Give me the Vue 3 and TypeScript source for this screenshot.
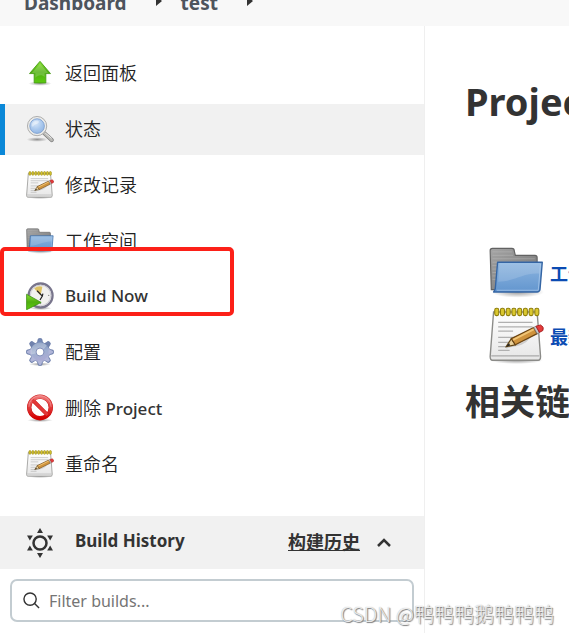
<script setup lang="ts">
import { ref } from 'vue'

interface Part {
  text: string
  han: boolean
}

interface Task {
  label: string
  icon: string
  active?: boolean
}

const tasks: Task[] = [
  { label: '返回面板', icon: 'up' },
  { label: '状态', icon: 'search', active: true },
  { label: '修改记录', icon: 'notepad' },
  { label: '工作空间', icon: 'folder' },
  { label: 'Build Now', icon: 'clock' },
  { label: '配置', icon: 'gear' },
  { label: '删除 Project', icon: 'delete' },
  { label: '重命名', icon: 'notepad' },
]

// Han and Latin runs carry different weights, so a label is split into both.
function parts(label: string): Part[] {
  const runs = label.match(/[\u4e00-\u9fff]+|[^\u4e00-\u9fff]+/g) ?? []
  return runs.map((text) => ({ text, han: /[\u4e00-\u9fff]/.test(text) }))
}

const teeth = [0, 45, 90, 135, 180, 225, 270, 315]
const rays = [0, 60, 120, 180, 240, 300]
const rings = [7, 12, 17, 22, 27, 32, 37, 42]
const filter = ref('')
</script>

<template>
  <div class="page">
    <svg class="sprite" aria-hidden="true">
      <defs>
        <linearGradient id="g-green" x1="0" y1="0" x2="0" y2="1">
          <stop offset="0" stop-color="#8ae234" /><stop offset=".5" stop-color="#4fae10" /><stop offset="1" stop-color="#5ccb10" />
        </linearGradient>
        <linearGradient id="g-blue" x1="0" y1="0" x2="0" y2="1">
          <stop offset="0" stop-color="#8db5df" /><stop offset="1" stop-color="#6396cf" />
        </linearGradient>
        <linearGradient id="g-grey" x1="0" y1="0" x2="1" y2="1">
          <stop offset="0" stop-color="#a5a5a5" /><stop offset="1" stop-color="#707070" />
        </linearGradient>
        <linearGradient id="g-paper" x1="0" y1="0" x2="0" y2="1">
          <stop offset="0" stop-color="#ffffff" /><stop offset="1" stop-color="#e6e6e6" />
        </linearGradient>
        <linearGradient id="g-gear" gradientUnits="userSpaceOnUse" x1="18" y1="2" x2="28" y2="46">
          <stop offset="0" stop-color="#5f7bab" /><stop offset=".5" stop-color="#9eaed0" /><stop offset="1" stop-color="#b3a8d6" />
        </linearGradient>
        <linearGradient id="g-red" x1="0" y1="0" x2="0" y2="1">
          <stop offset="0" stop-color="#ee7777" /><stop offset="1" stop-color="#d40000" />
        </linearGradient>
        <radialGradient id="g-lens" cx=".4" cy=".3" r=".8">
          <stop offset="0" stop-color="#d6e6f8" /><stop offset=".6" stop-color="#a5c5ec" /><stop offset="1" stop-color="#8fb3e2" />
        </radialGradient>
        <radialGradient id="g-shadow">
          <stop offset="0" stop-color="#000" stop-opacity=".4" /><stop offset="1" stop-color="#000" stop-opacity="0" />
        </radialGradient>
      </defs>

      <symbol id="icon-up" viewBox="0 0 48 48">
        <ellipse cx="24" cy="42" rx="20" ry="4" fill="url(#g-shadow)" />
        <path d="M24 4 L42 25 H34 V41 H14 V25 H6 Z" fill="url(#g-green)" stroke="#479c18" stroke-width="1.5" stroke-linejoin="round" />
        <path d="M24 8 L38 24 H32 V31 C26 25 20 29 16 32 V24 H10 Z" fill="#fff" opacity=".18" />
      </symbol>

      <symbol id="icon-search" viewBox="0 0 48 48">
        <ellipse cx="19" cy="42" rx="18" ry="4" fill="url(#g-shadow)" />
        <path d="M31 31 L44 43" stroke="#7d7d7d" stroke-width="7" stroke-linecap="round" />
        <path d="M31 31 L44 43" stroke="#b9b9b5" stroke-width="4.500" stroke-linecap="round" />
        <path d="M33 31 L44 40" stroke="#f4f4f4" stroke-width="1.5" />
        <circle cx="19" cy="19" r="16.500" fill="#ecece9" stroke="#a3a3a3" stroke-width="1.5" />
        <circle cx="19" cy="19" r="12.500" fill="url(#g-lens)" stroke="#7d9fd0" stroke-width="1.5" />
        <path d="M10 19 C9 13 15 9 20 10 C24 11 22 15 17 16 C13 17 13 22 10 19" fill="#fff" opacity=".4" />
      </symbol>

      <symbol id="icon-folder" viewBox="0 0 48 48">
        <ellipse cx="25" cy="41" rx="23" ry="5" fill="url(#g-shadow)" />
        <path d="M2 39 L1 5 Q1 3 3 3 H20 Q22 3 22 5 L23 9 H40 Q42 9 42 11 V39 Z" fill="url(#g-grey)" stroke="#626262" stroke-width="1" />
        <path d="M3 6 H20 M3 9 H21 M3 12 H40 M3 15 H40 M3 18 H9 M3 21 H8 M3 24 H8 M3 27 H7 M3 30 H7" stroke="#c2c2c2" stroke-width=".7" opacity=".5" />
        <path d="M7.500 15 H46.500 L44.500 39 Q44 41 42 41 H4 Q5 40 5.500 38 Z" fill="url(#g-blue)" stroke="#3465a4" stroke-width="1.2" stroke-linejoin="round" />
        <path d="M9 17 H45 L44 25 C30 24 22 32 8 32 Z" fill="#fff" opacity=".15" />
        <path d="M9 16.500 H45 L43 39.500 H7" fill="none" stroke="#c2dbf4" stroke-width=".8" opacity=".6" />
      </symbol>

      <symbol id="icon-notepad" viewBox="0 1 48 46" preserveAspectRatio="none">
        <ellipse cx="24" cy="44" rx="23" ry="3" fill="url(#g-shadow)" />
        <path d="M4 5 H42 L45 41 Q45 44 43 44 H3 Q1 44 1 41 Z" fill="url(#g-paper)" stroke="#8b8b88" stroke-width="1.2" />
        <path d="M2 40.500 H44" stroke="#aaa" stroke-width="1" />
        <path d="M8 13.500 H38 M8 17 H38 M8 20.500 H21 M8 25.500 H30 M8 29.500 H25 M8 33 H16 M8 36 H18" stroke="#b0b0b0" stroke-width="1" />
        <rect v-for="x in rings" :key="x" :x="x - 2" y="2" width="3.500" height="6" rx="1.500" fill="#dac72e" stroke="#8d7d0b" stroke-width=".9" />
        <path d="M15 34 C20 31 28 34 35 26" fill="none" stroke="#999" stroke-width="1.5" opacity=".4" />
        <path d="M15 33 L19.500 26.500 L23 31.500 Z" fill="#ead09a" stroke="#614414" stroke-width="1" />
        <path d="M19.500 26.500 L39 17.500 L42 22.500 L23 31.500 Z" fill="#cf933d" stroke="#6a4413" stroke-width="1" />
        <path d="M21 27.500 L39 19" stroke="#f0c576" stroke-width="1.5" />
        <path d="M39 17.500 L41 16.500 L44 21.500 L42 22.500 Z" fill="#c9c9c9" stroke="#777" stroke-width=".6" />
        <path d="M41 16.500 L45 15.500 Q48.500 17 47 20 L44 21.500 Z" fill="#e43b3b" stroke="#a62020" stroke-width=".8" />
        <path d="M15 33 L17.500 30 L18.500 32 Z" fill="#222" />
      </symbol>

      <symbol id="icon-clock" viewBox="0 0 48 48">
        <ellipse cx="25" cy="45" rx="19" ry="3" fill="url(#g-shadow)" />
        <circle cx="25" cy="23" r="20.500" fill="#f2f2ef" stroke="#78758c" stroke-width="4" />
        <circle cx="25" cy="23" r="17.500" fill="none" stroke="#c8c7d0" stroke-width="1.5" />
        <path d="M25 23 L14 11 Q20 6 28 8 Z" fill="#ddc163" />
        <path d="M19 15 L28 24 L24 31 M28 24 L29 20" fill="none" stroke="#222" stroke-width="2" />
        <circle cx="39" cy="23" r="1" fill="#777" /><circle cx="25" cy="37" r="1" fill="#777" />
        <path d="M1 21 L26 35 L1 47.500 Z" fill="url(#g-green)" stroke="#398c10" stroke-width="1.3" stroke-linejoin="round" />
      </symbol>

      <symbol id="icon-gear" viewBox="1 1 46 46">
        <ellipse cx="24" cy="44" rx="18" ry="3" fill="url(#g-shadow)" />
        <g fill="#7082ad">
          <path v-for="a in teeth" :key="a" d="M17 11 Q20 8 20 4 Q20 1 24 1 Q28 1 28 4 Q28 8 31 11 Z" :transform="`rotate(${a} 24 24)`" />
        </g>
        <circle cx="24" cy="24" r="16" fill="url(#g-gear)" stroke="#7082ad" stroke-width="1" />
        <path d="M18 10 Q21.500 8 21.500 4.500 Q22 2.500 24 2.500 Q26 2.500 26.500 4.500 Q26.500 8 30 10 Z" fill="#7389b6" />
        <path v-for="a in [90, 135, 180, 225, 270]" :key="a" d="M18 10 Q21.500 8 21.500 4.500 Q22 2.500 24 2.500 Q26 2.500 26.500 4.500 Q26.500 8 30 10 Z" fill="#b0b5d8" :transform="`rotate(${a} 24 24)`" />
        <path d="M9 28 A15.500 15.500 0 0 1 35 13 C32 20 20 27 9 28" fill="#fff" opacity=".28" />
        <circle cx="24" cy="24" r="6.500" fill="#fff" stroke="#7885b3" stroke-width="1.5" />
      </symbol>

      <symbol id="icon-delete" viewBox="0 0 48 48">
        <ellipse cx="24" cy="45" rx="22" ry="3" fill="url(#g-shadow)" />
        <circle cx="24" cy="23" r="18.500" fill="none" stroke="#c81414" stroke-width="7.500" />
        <path d="M11 10 L37 36" stroke="#c81414" stroke-width="6.500" />
        <circle cx="24" cy="23" r="18.500" fill="none" stroke="url(#g-red)" stroke-width="6" />
        <path d="M11 10 L37 36" stroke="#e23838" stroke-width="5" />
        <path d="M5 22 A19 19 0 0 1 43 22" fill="none" stroke="#f6a0a0" stroke-width="1.5" opacity=".7" />
      </symbol>
    </svg>

    <nav class="crumbs" aria-label="Breadcrumb">
      <a href="#">Dashboard</a>
      <svg class="crumb-arrow" viewBox="0 0 6 10" aria-hidden="true"><path d="M0 0 L6 5 L0 10 Z" /></svg>
      <a href="#">test</a>
      <svg class="crumb-arrow" viewBox="0 0 6 10" aria-hidden="true"><path d="M0 0 L6 5 L0 10 Z" /></svg>
    </nav>

    <div class="body">
      <aside class="side">
        <nav class="tasks">
          <a v-for="task in tasks" :key="task.label" href="#" class="task" :class="{ active: task.active }">
            <svg class="task-icon" aria-hidden="true"><use :href="`#icon-${task.icon}`" /></svg>
            <span class="task-label"><span v-for="part in parts(task.label)" :key="part.text" :class="{ han: part.han }">{{ part.text }}</span></span>
          </a>
        </nav>

        <section>
          <header class="history">
            <svg class="sun" viewBox="0 0 30 30" aria-hidden="true">
              <circle cx="15" cy="15" r="6.500" fill="none" stroke="#333" stroke-width="2.500" />
              <path v-for="a in rays" :key="a" d="M15 0 L18 5 H12 Z" fill="#333" :transform="`rotate(${a} 15 15)`" />
            </svg>
            <h2>Build History</h2>
            <a href="#" class="trend">构建历史</a>
            <button type="button" class="collapse" aria-label="Collapse">
              <svg viewBox="0 0 16 10" aria-hidden="true"><path d="M2 8 L8 2 L14 8" /></svg>
            </button>
          </header>
          <label class="filter">
            <svg viewBox="0 0 18 18" aria-hidden="true"><circle cx="7.500" cy="7.500" r="6.500" /><path d="M12 12 L17 17" /></svg>
            <input v-model="filter" type="text" placeholder="Filter builds..." aria-label="Filter builds" />
          </label>
        </section>
      </aside>

      <main class="main">
        <h1>Project test</h1>
        <div class="links">
          <a href="#"><svg class="big-icon" aria-hidden="true"><use href="#icon-folder" /></svg>工作空间</a>
          <a href="#"><svg class="big-icon" aria-hidden="true"><use href="#icon-notepad" /></svg>最新修改记录</a>
        </div>
        <h2>相关链接</h2>
      </main>
    </div>

    <div class="highlight"></div>
    <div class="watermark">CSDN @鸭鸭鸭鹅鸭鸭鸭</div>
  </div>
</template>

<style>
body {
  margin: 0;
  background: #fff;
}
</style>

<style scoped>
.page {
  position: relative;
  min-height: 100vh;
  display: flex;
  flex-direction: column;
  overflow: hidden;
  box-sizing: border-box;
  color: #333;
  font-family: "Noto Sans", "Noto Sans CJK SC", sans-serif;
  font-size: 17px;
}
a {
  color: inherit;
  text-decoration: none;
}
.sprite {
  position: absolute;
  width: 0;
  height: 0;
}
.crumbs {
  display: flex;
  align-items: flex-end;
  height: 26px;
  padding: 0 24px;
  box-sizing: border-box;
  overflow: hidden;
  background: #f8f8f8;
  color: #4d545d;
  font: bold 19px/24px "Noto Sans", sans-serif;
}
.crumbs a {
  padding-bottom: 11px;
}
.crumb-arrow {
  width: 6px;
  height: 10px;
  margin: 0 19px 20px 29px;
  fill: #333;
}
.body {
  flex: 1;
  display: grid;
  grid-template-columns: 425px minmax(0, 1fr);
}
.side {
  border-right: 1px solid #efefef;
}
.tasks {
  display: grid;
  grid-auto-rows: 1fr;
  gap: 5px;
  min-height: 441px;
  margin: 22px 0 27px;
}
.task {
  display: flex;
  align-items: center;
  gap: 11px;
  padding-left: 21px;
  border-left: 5px solid transparent;
  font-weight: 500;
  line-height: 24px;
}
.task-label {
  white-space: pre;
}
.han {
  color: #222;
  font-family: "Noto Sans CJK SC", sans-serif;
  font-size: 18px;
  font-weight: 350;
}
.task.active {
  background: #f1f1f1;
  border-left-color: #0b88d8;
}
.task-icon {
  width: 28px;
  height: 28px;
}
.history {
  display: flex;
  align-items: center;
  height: 53px;
  padding: 0 32px 0 25px;
  background: #f1f1f1;
}
.sun {
  width: 30px;
  height: 30px;
}
.history h2 {
  flex: 1;
  margin: 0 0 0 20px;
  padding-bottom: 3px;
  font-size: 17px;
  line-height: 24px;
}
.trend {
  padding-bottom: 3px;
  font: bold 18px/24px "Noto Sans CJK SC", sans-serif;
  text-decoration: underline;
}
.collapse {
  display: flex;
  margin: 0 0 0 16px;
  padding: 0;
  border: 0;
  background: none;
}
.collapse svg {
  width: 16px;
  height: 10px;
  fill: none;
  stroke: #333;
  stroke-width: 2.5;
}
.filter {
  display: flex;
  align-items: center;
  gap: 9px;
  height: 39px;
  margin: 10px 10px 11px;
  padding: 0 11px;
  border: 2px solid #c3ccd1;
  border-radius: 7px;
}
.filter svg {
  width: 17px;
  height: 17px;
  fill: none;
  stroke: #333;
  stroke-width: 1.5;
}
.filter input {
  flex: 1;
  min-width: 0;
  padding: 0;
  border: 0;
  outline: 0;
  background: none;
  color: #333;
  font: 16px/24px "Noto Sans", sans-serif;
}
.filter input::placeholder {
  color: #757575;
}
.main {
  padding: 47px 0 0 40px;
  overflow: hidden;
  white-space: nowrap;
}
.main h1 {
  margin: 0;
  font-size: 38px;
  line-height: 56px;
}
.links {
  display: grid;
  gap: 6px;
  margin: 115px 0 12px 24px;
}
.links a {
  display: flex;
  align-items: center;
  gap: 6px;
  color: #0b4bb3;
  font-size: 18px;
  font-weight: bold;
}
.big-icon {
  flex: none;
  width: 55px;
  height: 57px;
}
.main h2 {
  margin: 0;
  font-size: 35px;
  line-height: 52px;
}
.highlight {
  position: absolute;
  top: 247px;
  left: 0;
  width: 226px;
  height: 61px;
  border: 4px solid #fc2018;
  border-radius: 5px;
  pointer-events: none;
}
.watermark {
  position: absolute;
  right: 15px;
  bottom: 5px;
  color: rgba(255, 255, 255, .8);
  font: 300 20px/28px "Noto Sans CJK SC", sans-serif;
  text-shadow: 1px 1px 1px #777, 0 0 1px #aaa;
  pointer-events: none;
}
</style>
